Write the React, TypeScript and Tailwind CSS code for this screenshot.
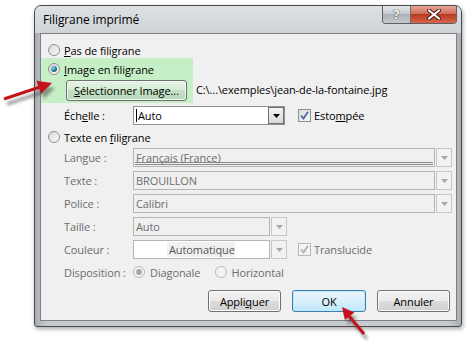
import React from "react";

const F = "font-['Open_Sans',sans-serif]";

function Radio({ checked, disabled }: { checked?: boolean; disabled?: boolean }) {
  return (
    <span
      className={`relative inline-flex h-[12px] w-[12px] shrink-0 items-center justify-center rounded-full border ${
        disabled ? "border-[#b8b8b8] bg-[#f4f4f4]" : "border-[#8e8f8f] bg-gradient-to-br from-[#d8d8d8] to-[#fbfbfb]"
      }`}
    >
      {checked && (
        <span
          className={`h-[6px] w-[6px] rounded-full ${
            disabled ? "bg-[#a8a8a8]" : "bg-[radial-gradient(circle_at_35%_35%,#7fe3f0,#1d6e86_60%,#0b3a4a)]"
          }`}
        />
      )}
    </span>
  );
}

function Check({ disabled }: { disabled?: boolean }) {
  return (
    <span
      className={`inline-flex h-[13px] w-[13px] shrink-0 items-center justify-center border ${
        disabled ? "border-[#b8b8b8] bg-[#f4f4f4]" : "border-[#8e8f8f] bg-gradient-to-br from-[#dcdcdc] to-[#f8f8f8]"
      }`}
    >
      <svg width="9" height="9" viewBox="0 0 9 9">
        <path
          d="M1 4.5 L3.5 7.5 L8 0.8"
          fill="none"
          stroke={disabled ? "#b0b0b0" : "#4a62a8"}
          strokeWidth="1.7"
        />
      </svg>
    </span>
  );
}

function Arrow({ disabled }: { disabled?: boolean }) {
  return (
    <span
      className={`flex h-full w-[16px] shrink-0 items-center justify-center border ${
        disabled ? "border-[#c8c8c8] bg-[#f2f2f2]" : "border-[#707070] bg-gradient-to-b from-[#f4f4f4] to-[#d8d8d8]"
      }`}
    >
      <svg width="7" height="4" viewBox="0 0 7 4">
        <path d="M0 0 H7 L3.5 4 Z" fill={disabled ? "#a8a8a8" : "#000"} />
      </svg>
    </span>
  );
}

function DisabledCombo({ text, w, underline }: { text: string; w: string; underline?: boolean }) {
  return (
    <div className={`flex h-[19px] ${w} items-stretch gap-px`}>
      <div className="relative flex flex-1 items-center border border-[#b5b5b5] bg-[#f0f0f0] px-[2px] pb-[1px] text-[#6d6d6d]">
        <span className="leading-none">{text}</span>
        {underline && (
          <span className="absolute bottom-[1px] left-[1px] right-[1px] h-[3px] border-y border-[#8a8a8a]" />
        )}
      </div>
      <Arrow disabled />
    </div>
  );
}

function Btn({ children, w, def }: { children: React.ReactNode; w: string; def?: boolean }) {
  return (
    <div
      className={`flex h-[22px] ${w} items-center justify-center rounded-[3px] border ${
        def
          ? "border-[#3c7fb1] bg-gradient-to-b from-[#eaf6fd] via-[#d9f0fc] to-[#bee6fd] shadow-[inset_0_0_0_1px_#bfe6fb]"
          : "border-[#707070] bg-[linear-gradient(#f2f2f2,#ebebeb_50%,#dddddd_50%,#cfcfcf)] shadow-[inset_0_0_0_1px_#fcfcfc]"
      } text-black`}
    >
      {children}
    </div>
  );
}

export default function App() {
  return (
    <div className={`relative h-[344px] w-[469px] overflow-hidden bg-white ${F} text-[11px] tracking-[-0.1px] leading-none`}>
      {/* window */}
      <div className="ml-[34px] mt-[5px] flex h-[322px] w-[428px] flex-col rounded-t-[7px] rounded-b-[3px] border border-[#4a4a4a] bg-[linear-gradient(90deg,#a9adb2,#c8ccd1_3%,#c8ccd1_97%,#a9adb2)] shadow-[1px_2px_4px_rgba(0,0,0,0.35)]">
        {/* title bar */}
        <div className="flex h-[27px] items-start rounded-t-[6px] bg-[linear-gradient(#dde1e6,#cfd3d8)]">
          <div className="ml-[8px] mt-[8px] text-[12px] text-black">Filigrane imprimé</div>
          <div className="ml-auto mr-[4px] flex h-[18px] overflow-hidden rounded-b-[4px] border border-t-0 border-[#5c6066]">
            <div className="flex w-[28px] items-center justify-center border-r border-[#6a6e74] bg-[linear-gradient(#e4e7ea,#c3c7cc_50%,#aeb3b9_50%,#c4c8cd)]">
              <span className="text-[13px] font-bold text-white [text-shadow:0_0_1px_#2a2a2a,0_0_1px_#2a2a2a]">?</span>
            </div>
            <div className="flex w-[45px] items-center justify-center bg-[linear-gradient(#e7a597,#d06a55_50%,#b93a22_50%,#d9654b)]">
              <svg width="14" height="11" viewBox="0 0 14 11">
                <path d="M2 1.5 L12 9.5 M12 1.5 L2 9.5" stroke="#4a1a12" strokeWidth="4" strokeLinecap="round" />
                <path d="M2 1.5 L12 9.5 M12 1.5 L2 9.5" stroke="#fff" strokeWidth="2.2" strokeLinecap="round" />
              </svg>
            </div>
          </div>
        </div>

        {/* client area */}
        <div className="mb-[5px] ml-[5px] mr-[4px] flex flex-1 flex-col border border-[#7d8187] bg-[#f0f0f0] text-black">
          {/* Pas de filigrane */}
          <div className="mt-[8px] flex h-[16px] items-center pl-[7px]">
            <Radio />
            <span className="ml-[4px]"><u>P</u>as de filigrane</span>
          </div>

          {/* image group */}
          <div className="flex items-end">
            <div className="flex h-[45px] w-[152px] flex-col bg-[#c6efc6]">
              <div className="mt-[3px] flex h-[16px] items-center pl-[7px]">
                <Radio checked />
                <span className="ml-[4px]"><u>I</u>mage en filigrane</span>
              </div>
              <div className="ml-[25px] mt-[3px] flex h-[21px] w-[121px] items-center justify-center rounded-[3px] border border-[#707070] bg-[linear-gradient(#e4f3e4,#d6ecd6_50%,#c4e0c4_50%,#b9d8b9)] shadow-[inset_0_0_0_1px_#eef8ee]">
                <span><u>S</u>électionner Image...</span>
              </div>
            </div>
            <span className="mb-[8px] ml-[3px]">C:\...\exemples\jean-de-la-fontaine.jpg</span>
          </div>

          {/* Echelle */}
          <div className="mt-[3px] flex h-[19px] items-center">
            <span className="w-[92px] pl-[23px]">Éch<u>e</u>lle :</span>
            <div className="flex h-full w-[152px] items-stretch border border-[#8f9297] bg-white">
              <div className="relative flex flex-1 items-center pl-[2px]">
                <span className="mr-[1px] h-[13px] w-px bg-black" />
                Auto
              </div>
              <Arrow />
            </div>
            <span className="ml-[13px]"><Check /></span>
            <span className="ml-[3px]">Esto<u>m</u>pée</span>
          </div>

          {/* Texte en filigrane */}
          <div className="mt-[4px] flex h-[16px] items-center pl-[7px]">
            <Radio />
            <span className="ml-[4px]">Texte en <u>f</u>iligrane</span>
          </div>

          <div className="mt-[3px] flex items-center">
            <span className="w-[92px] pl-[23px] text-[#6d6d6d]">Langue :</span>
            <DisabledCombo text="Français (France)" w="w-[319px]" underline />
          </div>
          <div className="mt-[4px] flex items-center">
            <span className="w-[92px] pl-[23px] text-[#6d6d6d]">Texte :</span>
            <DisabledCombo text="BROUILLON" w="w-[319px]" />
          </div>
          <div className="mt-[4px] flex items-center">
            <span className="w-[92px] pl-[23px] text-[#6d6d6d]">Police :</span>
            <DisabledCombo text="Calibri" w="w-[319px]" />
          </div>
          <div className="mt-[4px] flex items-center">
            <span className="w-[92px] pl-[23px] text-[#6d6d6d]">Taille :</span>
            <DisabledCombo text="Auto" w="w-[154px]" />
          </div>
          <div className="mt-[4px] flex items-center">
            <span className="w-[92px] pl-[23px] text-[#6d6d6d]">Couleur :</span>
            <div className="flex h-[19px] w-[154px] items-stretch gap-px">
              <div className="flex flex-1 items-center border border-[#b5b5b5] bg-white pl-[33px]">
                <span className="w-[68px] bg-[#f0f0f0] py-[2px] pl-[2px] text-[#555]">Automatique</span>
              </div>
              <Arrow disabled />
            </div>
            <span className="ml-[11px]"><Check disabled /></span>
            <span className="ml-[3px] text-[#6d6d6d]">Translucide</span>
          </div>

          <div className="mt-[5px] flex h-[16px] items-center text-[#6d6d6d]">
            <span className="w-[92px] pl-[23px]">Disposition :</span>
            <Radio checked disabled />
            <span className="ml-[5px]">Diagonale</span>
            <span className="ml-[15px]"><Radio disabled /></span>
            <span className="ml-[4px]">Horizontal</span>
          </div>

          <div className="mt-[10px] flex justify-end gap-[11px] pr-[6px]">
            <Btn w="w-[73px]">Appli<u>q</u>uer</Btn>
            <Btn w="w-[74px]" def>OK</Btn>
            <Btn w="w-[73px]">Annuler</Btn>
          </div>
        </div>
      </div>

      {/* red arrows */}
      <svg className="pointer-events-none absolute left-0 top-0" width="469" height="344" viewBox="0 0 469 344">
        <defs>
          <filter id="sh" x="-20%" y="-20%" width="140%" height="140%">
            <feGaussianBlur stdDeviation="1.5" />
          </filter>
        </defs>
        <g opacity="0.45" filter="url(#sh)" transform="translate(3,5)">
          <line x1="4" y1="99" x2="40" y2="87" stroke="#333" strokeWidth="3.5" />
          <polygon points="52,83 41,94 36.5,80.8" fill="#333" />
          <line x1="364" y1="334" x2="349" y2="316" stroke="#333" strokeWidth="3.5" />
          <polygon points="342,307 354.3,312.5 344.9,320.1" fill="#333" />
        </g>
        <line x1="4" y1="99" x2="40" y2="87" stroke="#c3141c" strokeWidth="3" />
        <polygon points="52,83 41,94 36.5,80.8" fill="#c3141c" />
        <line x1="364" y1="334" x2="349" y2="316" stroke="#c3141c" strokeWidth="3" />
        <polygon points="342,307 354.3,312.5 344.9,320.1" fill="#c3141c" />
      </svg>
    </div>
  );
}
